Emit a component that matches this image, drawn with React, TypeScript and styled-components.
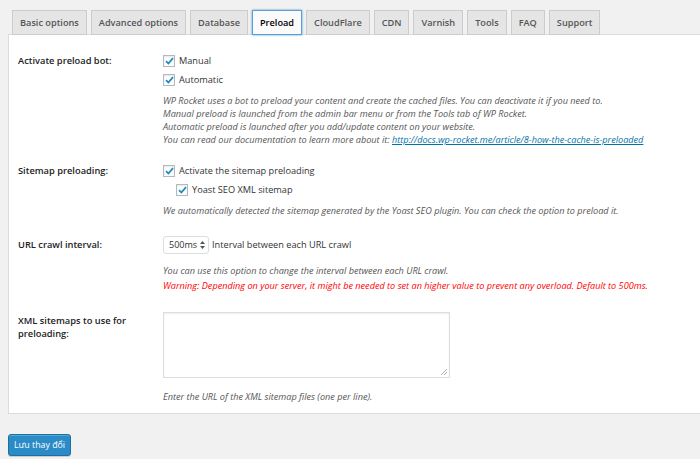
import React from "react";
import styled, { createGlobalStyle } from "styled-components";

const Global = createGlobalStyle`
  html, body { margin: 0; padding: 0; }
  body {
    background: #f1f1f1;
    font-family: "Open Sans", "Noto Sans", sans-serif;
    color: #444;
    overflow: hidden;
    width: 700px;
    height: 459px;
  }
`;

const Page = styled.div`
  padding: 10px 0 0 8px;
`;

const Tabs = styled.div`
  display: flex;
  gap: 4px;
  padding-left: 4px;
  position: relative;
  z-index: 1;
  margin-bottom: -1px;
`;

const Tab = styled.div<{ $active?: boolean }>`
  height: 23px;
  padding: 0 7px;
  display: flex;
  align-items: center;
  font-size: 9.2px;
  font-weight: 600;
  color: ${(p) => (p.$active ? "#000" : "#555")};
  background: ${(p) => (p.$active ? "#fbfbfb" : "#e5e5e5")};
  border: 1px solid ${(p) => (p.$active ? "#5b9dd9" : "#ccc")};
  box-shadow: ${(p) => (p.$active ? "0 0 2px rgba(30,140,190,.8)" : "none")};
`;

const Panel = styled.div`
  background: #fff;
  border: 1px solid #dcdcdc;
  margin-right: -20px;
  padding: 8px 0 3px 9px;
`;

const Row = styled.div<{ $pt?: number }>`
  display: grid;
  grid-template-columns: 145px 1fr;
  padding: ${(p) => p.$pt ?? 8}px 0 7px;
`;

const Label = styled.div`
  font-size: 9.3px;
  font-weight: 600;
  color: #222;
  line-height: 13px;
  padding-top: 3px;
`;

const Field = styled.div`
  display: flex;
  flex-direction: column;
  font-size: 9.2px;
  color: #333;
`;

const CheckLine = styled.label<{ $indent?: number }>`
  display: flex;
  align-items: center;
  height: 19px;
  gap: 4px;
  padding-left: ${(p) => p.$indent ?? 0}px;
`;

const Box = styled.span`
  width: 10px;
  height: 10px;
  border: 1px solid #b4b9be;
  background: #fff;
  box-shadow: inset 0 1px 2px rgba(0, 0, 0, 0.1);
  display: inline-flex;
  align-items: center;
  justify-content: center;
`;

const Desc = styled.div<{ $mt?: number; $warn?: boolean }>`
  font-style: italic;
  font-size: 9.15px;
  line-height: 13px;
  color: ${(p) => (p.$warn ? "#f00" : "#555")};
  margin-top: ${(p) => p.$mt ?? 5}px;
`;

const Link = styled.a`
  color: #0073aa;
  text-decoration: underline;
`;

const SelectLine = styled.div`
  display: flex;
  align-items: center;
  gap: 3px;
  height: 19px;
`;

const Select = styled.div`
  height: 16px;
  border: 1px solid #ddd;
  border-radius: 3px;
  display: flex;
  align-items: center;
  justify-content: space-between;
  padding: 0 3px 0 5px;
  width: 36px;
  color: #333;
  font-size: 9px;
`;

const TextArea = styled.div`
  width: 285px;
  height: 64px;
  margin-top: 1px;
  border: 1px solid #ddd;
  box-shadow: inset 0 1px 2px rgba(0, 0, 0, 0.07);
  position: relative;
`;

const Grip = styled.svg`
  position: absolute;
  right: 1px;
  bottom: 1px;
`;

const Button = styled.button`
  margin-top: 20px;
  height: 22px;
  width: 63px;
  padding: 0;
  background: #2b8bc7;
  border: 1px solid #1f6e9f;
  border-radius: 3px;
  color: #fff;
  font-family: "Open Sans", "Noto Sans", sans-serif;
  font-size: 8.8px;
  box-shadow: inset 0 1px 0 rgba(120, 200, 230, 0.5), 0 1px 0 rgba(0,0,0,.15);
`;

const Check = () => (
  <Box>
    <svg width="9" height="8" viewBox="0 0 9 8">
      <path d="M1 4.2 L3.4 6.5 L8 1.2" fill="none" stroke="#1e8cbe" strokeWidth="1.8" />
    </svg>
  </Box>
);

const tabs = [
  "Basic options",
  "Advanced options",
  "Database",
  "Preload",
  "CloudFlare",
  "CDN",
  "Varnish",
  "Tools",
  "FAQ",
  "Support",
];

export default function App() {
  return (
    <>
      <Global />
      <Page>
        <Tabs>
          {tabs.map((t) => (
            <Tab key={t} $active={t === "Preload"}>
              {t}
            </Tab>
          ))}
        </Tabs>
        <Panel>
          <Row>
            <Label>Activate preload bot:</Label>
            <Field>
              <CheckLine>
                <Check />
                Manual
              </CheckLine>
              <CheckLine>
                <Check />
                Automatic
              </CheckLine>
              <Desc>
                WP Rocket uses a bot to preload your content and create the cached files. You can deactivate it if you need to.
                <br />
                Manual preload is launched from the admin bar menu or from the Tools tab of WP Rocket.
                <br />
                Automatic preload is launched after you add/update content on your website.
                <br />
                You can read our documentation to learn more about it:{" "}
                <Link href="#">http://docs.wp-rocket.me/article/8-how-the-cache-is-preloaded</Link>
              </Desc>
            </Field>
          </Row>
          <Row>
            <Label>Sitemap preloading:</Label>
            <Field>
              <CheckLine>
                <Check />
                Activate the sitemap preloading
              </CheckLine>
              <CheckLine $indent={13}>
                <Check />
                Yoast SEO XML sitemap
              </CheckLine>
              <Desc>
                We automatically detected the sitemap generated by the Yoast SEO plugin. You can check the option to preload it.
              </Desc>
            </Field>
          </Row>
          <Row $pt={11}>
            <Label>URL crawl interval:</Label>
            <Field>
              <SelectLine>
                <Select>
                  500ms
                  <svg width="5" height="8" viewBox="0 0 5 8">
                    <path d="M0 3 L2.5 0 L5 3 Z M0 5 L2.5 8 L5 5 Z" fill="#555" />
                  </svg>
                </Select>
                Interval between each URL crawl
              </SelectLine>
              <Desc $mt={10}>You can use this option to change the interval between each URL crawl.</Desc>
              <Desc $mt={2} $warn>
                Warning: Depending on your server, it might be needed to set an higher value to prevent any overload. Default to 500ms.
              </Desc>
            </Field>
          </Row>
          <Row $pt={12}>
            <Label>
              XML sitemaps to use for
              <br />
              preloading:
            </Label>
            <Field>
              <TextArea>
                <Grip width="8" height="8" viewBox="0 0 8 8">
                  <path d="M7 1 L1 7 M7 4 L4 7" stroke="#999" strokeWidth="0.8" />
                </Grip>
              </TextArea>
              <Desc $mt={12}>Enter the URL of the XML sitemap files (one per line).</Desc>
            </Field>
          </Row>
        </Panel>
        <Button>Lưu thay đổi</Button>
      </Page>
    </>
  );
}
